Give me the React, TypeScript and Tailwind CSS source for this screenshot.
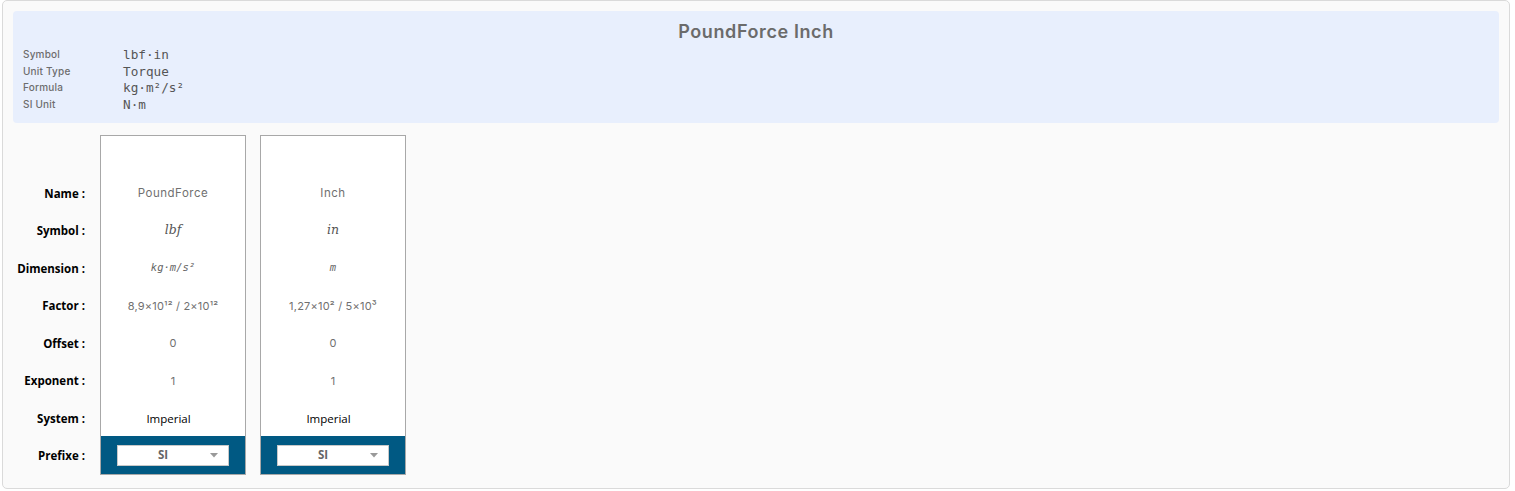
import React from 'react';

const headerRows = [
  { label: 'Symbol', value: 'lbf·in' },
  { label: 'Unit Type', value: 'Torque' },
  { label: 'Formula', value: 'kg·m²/s²' },
  { label: 'SI Unit', value: 'N·m' },
];

const labels = ['Name', 'Symbol', 'Dimension', 'Factor', 'Offset', 'Exponent', 'System', 'Prefixe'];

const units = [
  {
    name: 'PoundForce',
    symbol: 'lbf',
    dimension: 'kg·m/s²',
    factor: '8,9×10¹² / 2×10¹²',
    offset: '0',
    exponent: '1',
    system: 'Imperial',
  },
  {
    name: 'Inch',
    symbol: 'in',
    dimension: 'm',
    factor: '1,27×10² / 5×10³',
    offset: '0',
    exponent: '1',
    system: 'Imperial',
  },
];

const mont = 'font-["Inter",sans-serif]';
const row = 'h-[37.5px] pt-[3px] flex items-center justify-center';

export default function App() {
  return (
    <div className="bg-white w-[1515px] h-[491px]">
      <div className="ml-[2px] w-[1508px] h-[489px] border border-[#dadada] rounded-[5px] bg-[#fafafa] pt-[10px] pl-[10px] pr-[10px]">
        <div className="h-[112px] bg-[#e8effd] rounded-[4px] pl-[10px] pt-[10px]">
          <div className={`${mont} text-center text-[18px] tracking-[0.6px] font-semibold text-[#6b6b6b] leading-[22px] pr-[10px]`}>
            PoundForce Inch
          </div>
          <div className="mt-[3px] flex flex-col">
            {headerRows.map((r) => (
              <div key={r.label} className="flex items-center h-[16.8px]">
                <div className={`${mont} w-[100px] text-[10px] tracking-[0.2px] font-medium text-[#6d6d6d]`}>{r.label}</div>
                <div className='font-["DejaVu_Sans_Mono",monospace] text-[12.7px] text-[#555]'>{r.value}</div>
              </div>
            ))}
          </div>
        </div>

        <div className="mt-[12px] flex gap-[15px]">
          <div className='w-[72px] pt-[38px] flex flex-col font-["Open_Sans",sans-serif] text-[11.5px] font-bold text-black'>
            {labels.map((l, i) => (
              <div key={l} className={`${i === 7 ? 'h-[38px]' : 'h-[37.5px]'} pt-[3px] flex items-center justify-end`}>
                {l} :
              </div>
            ))}
          </div>
          <div className="flex gap-[14px]">
            {units.map((u) => (
              <div key={u.name} className="w-[146px] border border-[#a8a8a8] bg-white flex flex-col">
                <div className="h-[37px]" />
                <div className={`${row} ${mont} text-[11.5px] tracking-[0.5px] text-[#707070]`}>{u.name}</div>
                <div className={`${row} font-["DejaVu_Serif",serif] italic text-[12.5px] text-[#555]`}>{u.symbol}</div>
                <div className={`${row} font-["DejaVu_Sans_Mono",monospace] italic text-[10.5px] text-[#666]`}>{u.dimension}</div>
                <div className={`${row} ${mont} text-[11px] tracking-[0.2px] text-[#707070]`}>{u.factor}</div>
                <div className={`${row} ${mont} text-[11px] text-[#707070]`}>{u.offset}</div>
                <div className={`${row} ${mont} text-[11px] text-[#707070]`}>{u.exponent}</div>
                <div className={`${row} pr-[9px] font-["Open_Sans",sans-serif] text-[11.5px] text-black`}>{u.system}</div>
                <div className="h-[38px] pt-[1px] flex items-center justify-center bg-[#005983]">
                  <div className="w-[112px] h-[21px] bg-white border border-[#c8c8c8] flex items-center pl-[40px] pr-[10px]">
                    <span className='flex-1 font-["Open_Sans",sans-serif] font-bold text-[11.5px] text-[#666]'>SI</span>
                    <svg width="8" height="5" viewBox="0 0 8 5">
                      <path d="M0 0 L8 0 L4 4.5 Z" fill="#999" />
                    </svg>
                  </div>
                </div>
              </div>
            ))}
          </div>
        </div>
      </div>
    </div>
  );
}
